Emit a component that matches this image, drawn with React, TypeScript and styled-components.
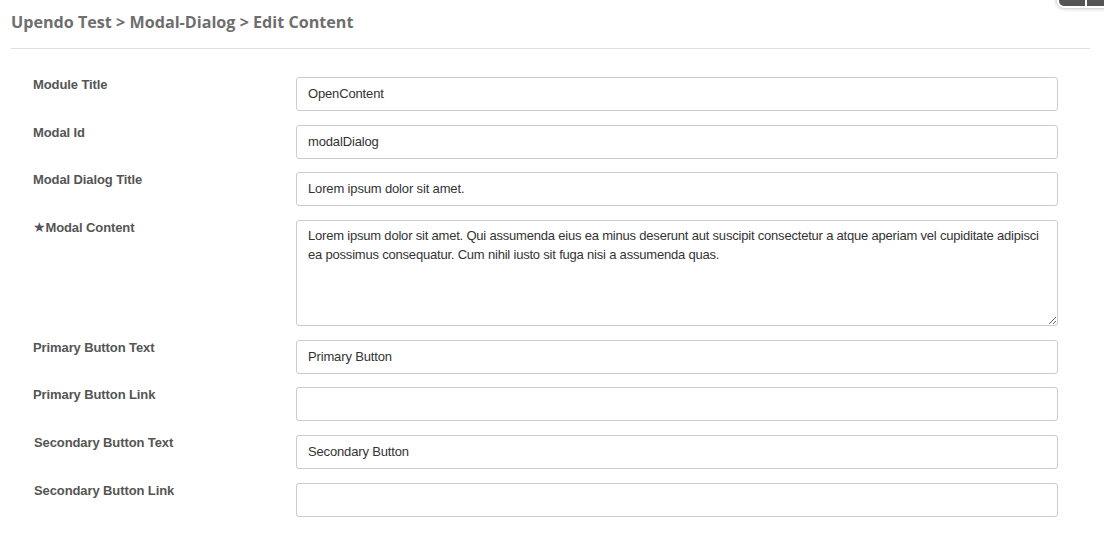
import React from 'react';
import styled, { createGlobalStyle } from 'styled-components';

const FIELDS = [
  { label: 'Module Title', value: 'OpenContent' },
  { label: 'Modal Id', value: 'modalDialog' },
  { label: 'Modal Dialog Title', value: 'Lorem ipsum dolor sit amet.' },
  {
    label: 'Modal Content',
    value:
      'Lorem ipsum dolor sit amet. Qui assumenda eius ea minus deserunt aut suscipit consectetur a atque aperiam vel cupiditate adipisci ea possimus consequatur. Cum nihil iusto sit fuga nisi a assumenda quas.',
    multiline: true,
    required: true,
  },
  { label: 'Primary Button Text', value: 'Primary Button' },
  { label: 'Primary Button Link', value: '' },
  { label: 'Secondary Button Text', value: 'Secondary Button', shift: true },
  { label: 'Secondary Button Link', value: '', shift: true },
];

export default function App() {
  return (
    <>
      <GlobalStyle />
      <Page>
        <Header>
          <Crumbs>Upendo Test &gt; Modal-Dialog &gt; Edit Content</Crumbs>
        </Header>
        <Form>
          {FIELDS.map(item => (
            <Row key={item.label}>
              <Label $shift={item.shift}>
                {item.required && <Star>★</Star>}
                {item.label}
              </Label>
              {item.multiline ? (
                <Area defaultValue={item.value} />
              ) : (
                <Input defaultValue={item.value} />
              )}
            </Row>
          ))}
        </Form>
        <Toolbar>
          <ToolBtn />
          <ToolBtn />
        </Toolbar>
      </Page>
    </>
  );
}

const GlobalStyle = createGlobalStyle`
  body {
    margin: 0;
    background: #fff;
    font-family: 'Liberation Sans', Arial, sans-serif;
  }
`;

const Page = styled.div`
  position: relative;
  width: 1104px;
  height: 559px;
  overflow: hidden;
`;

const Header = styled.div`
  margin: 0 14px 0 11px;
  padding: 10px 0 13px;
  border-bottom: 1px solid #e0e0e0;
`;

const Crumbs = styled.h1`
  margin: 0;
  font-family: 'Open Sans', sans-serif;
  font-size: 16.15px;
  font-weight: 700;
  line-height: 25px;
  color: #6e6e6e;
`;

const Form = styled.div`
  display: flex;
  flex-direction: column;
  gap: 13.7px;
  padding: 28px 0 0 33px;
`;

const Row = styled.div`
  display: flex;
  align-items: flex-start;
`;

const Label = styled.label<{ $shift?: boolean }>`
  width: 263px;
  padding-left: ${props => (props.$shift ? '1px' : '0')};
  box-sizing: border-box;
  font-size: 13px;
  font-weight: 700;
  line-height: 15px;
  letter-spacing: -0.1px;
  color: #555;
`;

const Star = styled.span`
  font-family: 'DejaVu Sans', sans-serif;
  font-size: 14px;
`;

const fieldCss = `
  width: 762px;
  box-sizing: border-box;
  border: 1px solid #ccc;
  border-radius: 3px;
  background: #fff;
  font-family: 'Liberation Sans', Arial, sans-serif;
  font-size: 13px;
  color: #333;
  padding: 0 11px;
  outline: none;
`;

const Input = styled.input`
  ${fieldCss}
  height: 34px;
  padding-bottom: 1px;
  letter-spacing: -0.15px;
`;

const Area = styled.textarea`
  ${fieldCss}
  height: 106px;
  padding-top: 6px;
  line-height: 18.5px;
  letter-spacing: -0.2px;
  resize: vertical;
`;

const Toolbar = styled.div`
  position: absolute;
  top: -14px;
  left: 1057px;
  display: flex;
  gap: 2px;
  border: 2px solid #fff;
  border-radius: 7px;
  background: #fff;
  box-shadow: 0 0 4px rgba(0, 0, 0, 0.35);
  overflow: hidden;
`;

const ToolBtn = styled.div`
  width: 26px;
  height: 18px;
  background: #555;
`;
